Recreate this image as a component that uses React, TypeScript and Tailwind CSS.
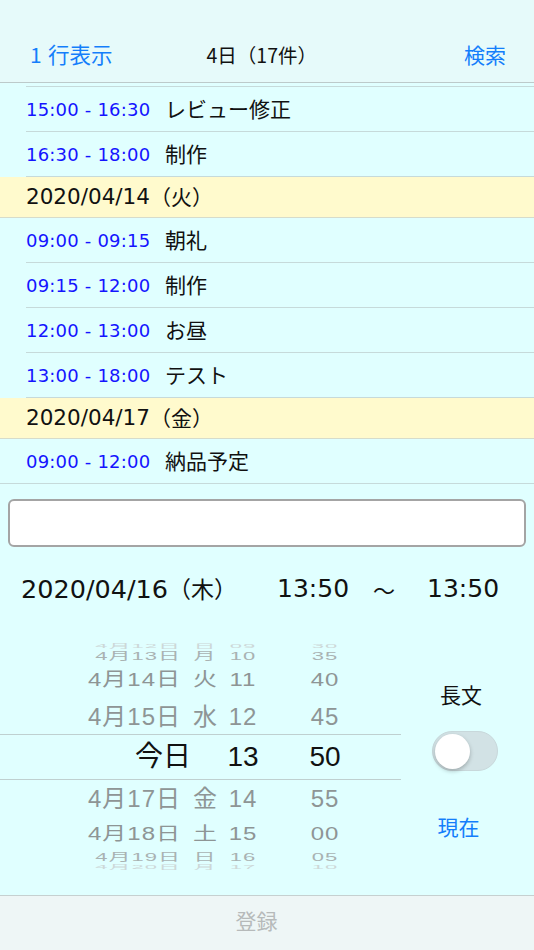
import React from 'react';

type Entry =
  | { kind: 'row'; time: string; title: string; full?: boolean }
  | { kind: 'date'; date: string; dow: string };

const entries: Entry[] = [
  { kind: 'row', time: '15:00 - 16:30', title: 'レビュー修正' },
  { kind: 'row', time: '16:30 - 18:00', title: '制作' },
  { kind: 'date', date: '2020/04/14', dow: '（火）' },
  { kind: 'row', time: '09:00 - 09:15', title: '朝礼' },
  { kind: 'row', time: '09:15 - 12:00', title: '制作' },
  { kind: 'row', time: '12:00 - 13:00', title: 'お昼' },
  { kind: 'row', time: '13:00 - 18:00', title: 'テスト' },
  { kind: 'date', date: '2020/04/17', dow: '（金）' },
  { kind: 'row', time: '09:00 - 12:00', title: '納品予定', full: true },
];

const jp = { fontFamily: '"Noto Sans CJK JP", sans-serif' };
const verdana = { fontFamily: '"DejaVu Sans", "Noto Sans CJK JP", sans-serif' };
const picker = { fontFamily: '"Liberation Sans", "Noto Sans CJK JP", sans-serif' };

type WheelRow = { date: string; dow: string; h: string; m: string; box: string; text: string };

// rows of the wheel, top to bottom, outside the selected band
const above: WheelRow[] = [
  { date: '4月12日', dow: '日', h: '09', m: '30', box: 'h-[10px]', text: 'text-[22px] scale-y-[0.25] text-[#cdd8d8]' },
  { date: '4月13日', dow: '月', h: '10', m: '35', box: 'h-[10px]', text: 'text-[22px] scale-y-[0.5] text-[#a9b2b2]' },
  { date: '4月14日', dow: '火', h: '11', m: '40', box: 'h-[38px]', text: 'text-[24px] scale-y-[0.8] text-[#8e9595]' },
  { date: '4月15日', dow: '水', h: '12', m: '45', box: 'h-[35px]', text: 'text-[24px] text-[#8e9595]' },
];
const below: WheelRow[] = [
  { date: '4月17日', dow: '金', h: '14', m: '55', box: 'h-[38px]', text: 'text-[24px] text-[#8e9595]' },
  { date: '4月18日', dow: '土', h: '15', m: '00', box: 'h-[32px]', text: 'text-[24px] scale-y-[0.75] text-[#8e9595]' },
  { date: '4月19日', dow: '日', h: '16', m: '05', box: 'h-[14px]', text: 'text-[22px] scale-y-[0.5] text-[#a9b2b2]' },
  { date: '4月20日', dow: '月', h: '17', m: '10', box: 'h-[6px]', text: 'text-[22px] scale-y-[0.25] text-[#cdd8d8]' },
];

const Wheel: React.FC<{ row: WheelRow }> = ({ row }) => (
  <div className={`${row.box} flex items-center overflow-visible`}>
    <div className={`flex items-center leading-none tracking-[1px] ${row.text}`}>
      <span className="w-[181px] text-right">{row.date}</span>
      <span className="ml-[12px] w-[24px] text-center">{row.dow}</span>
      <span className="w-[52px] text-center">{row.h}</span>
      <span className="w-[112px] text-center">{row.m}</span>
    </div>
  </div>
);

export default function App() {
  return (
    <div className="w-[534px] h-[950px] bg-[#e0ffff] flex flex-col overflow-hidden">
      {/* nav bar */}
      <div className="h-[83px] bg-[#e6fafa] border-b border-[#bccaca] flex items-center pt-[27px]" style={jp}>
        <span className="pl-[30px] w-[48px] text-[21px] text-[#147efb]">1</span>
        <span className="text-[21.5px] text-[#147efb]">行表示</span>
        <span className="ml-[94px] text-[19.5px] text-[#111]">4日（17件）</span>
        <span className="flex-1" />
        <span className="pr-[28px] text-[21px] text-[#147efb]">検索</span>
      </div>

      {/* list */}
      <div className="flex flex-col">
        <div className="h-[4px] ml-[26px] border-b border-[#c6dada]" />
        {entries.map((e, i) =>
          e.kind === 'date' ? (
            <div key={i} className="h-[41px] bg-[#fffacd] border-b border-[#d6dccb] flex items-center pl-[26px] text-[#111]">
              <span className="text-[21.5px]" style={verdana}>{e.date}</span>
              <span className="text-[21px]" style={jp}>{e.dow}</span>
            </div>
          ) : (
            <div key={i} className={`h-[45px] flex items-center border-b border-[#c6dada] ${e.full ? 'pl-[26px]' : 'ml-[26px]'}`}>
              <span className="w-[139px] text-[18px] tracking-[0.2px] text-[#1414ff]" style={verdana}>{e.time}</span>
              <span className="text-[21px] text-[#111]" style={jp}>{e.title}</span>
            </div>
          )
        )}
      </div>

      {/* text field */}
      <div className="mt-[15px] mx-[8px] h-[48px] bg-white border-2 border-[#a4a4a4] rounded-[6px]" />

      {/* selected date/time */}
      <div className="h-[84px] flex items-center text-[#111]">
        <div className="ml-[21px] w-[256px]">
          <span className="text-[25.5px]" style={verdana}>2020/04/16</span>
          <span className="text-[23px]" style={jp}>（木）</span>
        </div>
        <span className="w-[96px] text-[25px]" style={verdana}>13:50</span>
        <span className="w-[54px] text-[22px]" style={jp}>～</span>
        <span className="text-[25px]" style={verdana}>13:50</span>
      </div>

      {/* picker + side controls */}
      <div className="flex h-[239px]">
        <div className="w-[401px] flex flex-col pt-[10px]" style={picker}>
          {above.map((r) => <Wheel key={r.date} row={r} />)}
          <div className="h-[46px] border-y border-[#bfd0d0] flex items-center">
            <div className="flex items-center leading-none text-[28px] text-[#111]">
              <span className="w-[191px] text-right">今日</span>
              <span className="w-[26px]" />
              <span className="w-[52px] text-center">13</span>
              <span className="w-[112px] text-center">50</span>
            </div>
          </div>
          {below.map((r) => <Wheel key={r.date} row={r} />)}
        </div>
        <div className="flex-1 flex flex-col items-center pr-[8px]" style={jp}>
          <span className="mt-[51px] mr-[5px] h-[24px] leading-[24px] text-[21px] text-[#111]">長文</span>
          <div className="mt-[25px] ml-[3px] w-[66px] h-[40px] rounded-full bg-[#d2e2e5] border border-[#c8d8db] flex items-center pl-[2px]">
            <div className="w-[35px] h-[35px] rounded-full bg-white shadow-[0_2px_4px_rgba(0,0,0,0.25)]" />
          </div>
          <span className="mt-[43px] mr-[10px] h-[24px] leading-[24px] text-[21px] text-[#147efb]">現在</span>
        </div>
      </div>

      <div className="h-[25px]" />

      {/* toolbar */}
      <div className="h-[55px] bg-[#eef6f6] border-t border-[#c6d0d0] flex items-center justify-center pr-[21px] pb-[4px]" style={jp}>
        <span className="text-[21px] text-[#b6baba]">登録</span>
      </div>
    </div>
  );
}
